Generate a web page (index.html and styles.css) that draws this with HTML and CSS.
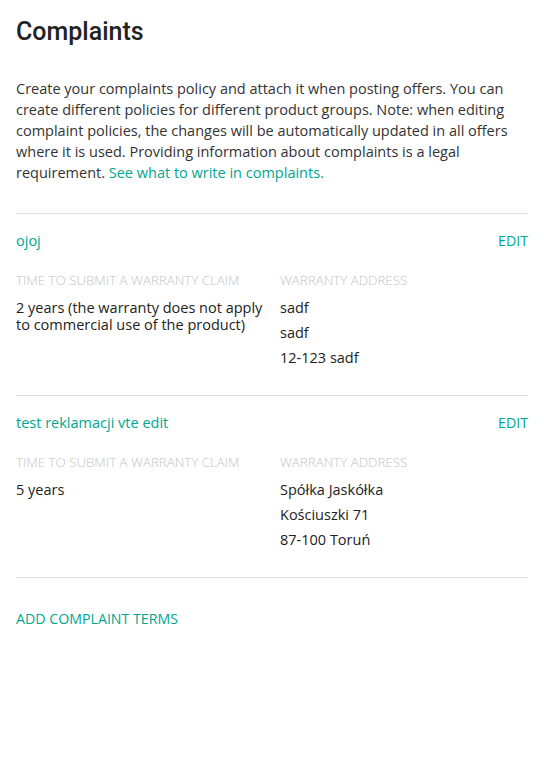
FILE: index.html
```html
<!DOCTYPE html>
<html lang="en">
<head>
<meta charset="utf-8">
<title>Complaints</title>
<link rel="stylesheet" href="styles.css">
</head>
<body>
<main class="page">
  <h1 class="title">Complaints</h1>
  <p class="intro">Create your complaints policy and attach it when posting offers. You can create different policies for different product groups. Note: when editing complaint policies, the changes will be automatically updated in all offers where it is used. Providing information about complaints is a legal requirement. <a class="link" href="#">See what to write in complaints.</a></p>

  <section class="policy">
    <div class="policy-head">
      <a class="link" href="#">ojoj</a>
      <a class="link caps" href="#">EDIT</a>
    </div>
    <div class="policy-grid">
      <div class="field">
        <div class="label">TIME TO SUBMIT A WARRANTY CLAIM</div>
        <div class="value">2 years (the warranty does not apply to commercial use of the product)</div>
      </div>
      <div class="field">
        <div class="label">WARRANTY ADDRESS</div>
        <div class="value addr">sadf</div>
        <div class="value addr">sadf</div>
        <div class="value addr">12-123 sadf</div>
      </div>
    </div>
  </section>

  <section class="policy">
    <div class="policy-head">
      <a class="link" href="#">test reklamacji vte edit</a>
      <a class="link caps" href="#">EDIT</a>
    </div>
    <div class="policy-grid">
      <div class="field">
        <div class="label">TIME TO SUBMIT A WARRANTY CLAIM</div>
        <div class="value">5 years</div>
      </div>
      <div class="field">
        <div class="label">WARRANTY ADDRESS</div>
        <div class="value addr">Spółka Jaskółka</div>
        <div class="value addr">Kościuszki 71</div>
        <div class="value addr">87-100 Toruń</div>
      </div>
    </div>
  </section>

  <div class="add-row">
    <a class="link caps" href="#">ADD COMPLAINT TERMS</a>
  </div>
</main>
</body>
</html>
```
FILE: styles.css
```css
html, body {
  margin: 0;
  padding: 0;
  background: #fff;
}
body {
  font-family: "Open Sans", "Noto Sans", "Liberation Sans", sans-serif;
  color: #222;
  font-size: 14.5px;
}
.page {
  padding: 14px 16px 40px;
}
.title {
  font-family: Roboto, "Liberation Sans", sans-serif;
  font-weight: 500;
  font-size: 25px;
  line-height: 36px;
  margin: 0 0 28px;
  color: #222;
}
.intro {
  margin: 0 0 30px;
  line-height: 21px;
  color: #333;
}
.link {
  color: #00a790;
  text-decoration: none;
}
.caps {
  font-size: 14.2px;
}
.policy {
  border-top: 1px solid #e0e0e0;
  padding: 17px 0 21px;
}
.policy-head {
  display: flex;
  justify-content: space-between;
  line-height: 20px;
  margin-bottom: 21px;
}
.policy-grid {
  display: grid;
  grid-template-columns: 1fr 1fr;
  column-gap: 16px;
}
.label {
  font-weight: 300;
  font-size: 13.3px;
  line-height: 17px;
  color: #c4c4c4;
  margin-bottom: 10px;
}
.value {
  line-height: 17px;
  color: #222;
}
.addr {
  margin-bottom: 8px;
}
.add-row {
  border-top: 1px solid #e0e0e0;
  padding-top: 31px;
  line-height: 20px;
}
```
